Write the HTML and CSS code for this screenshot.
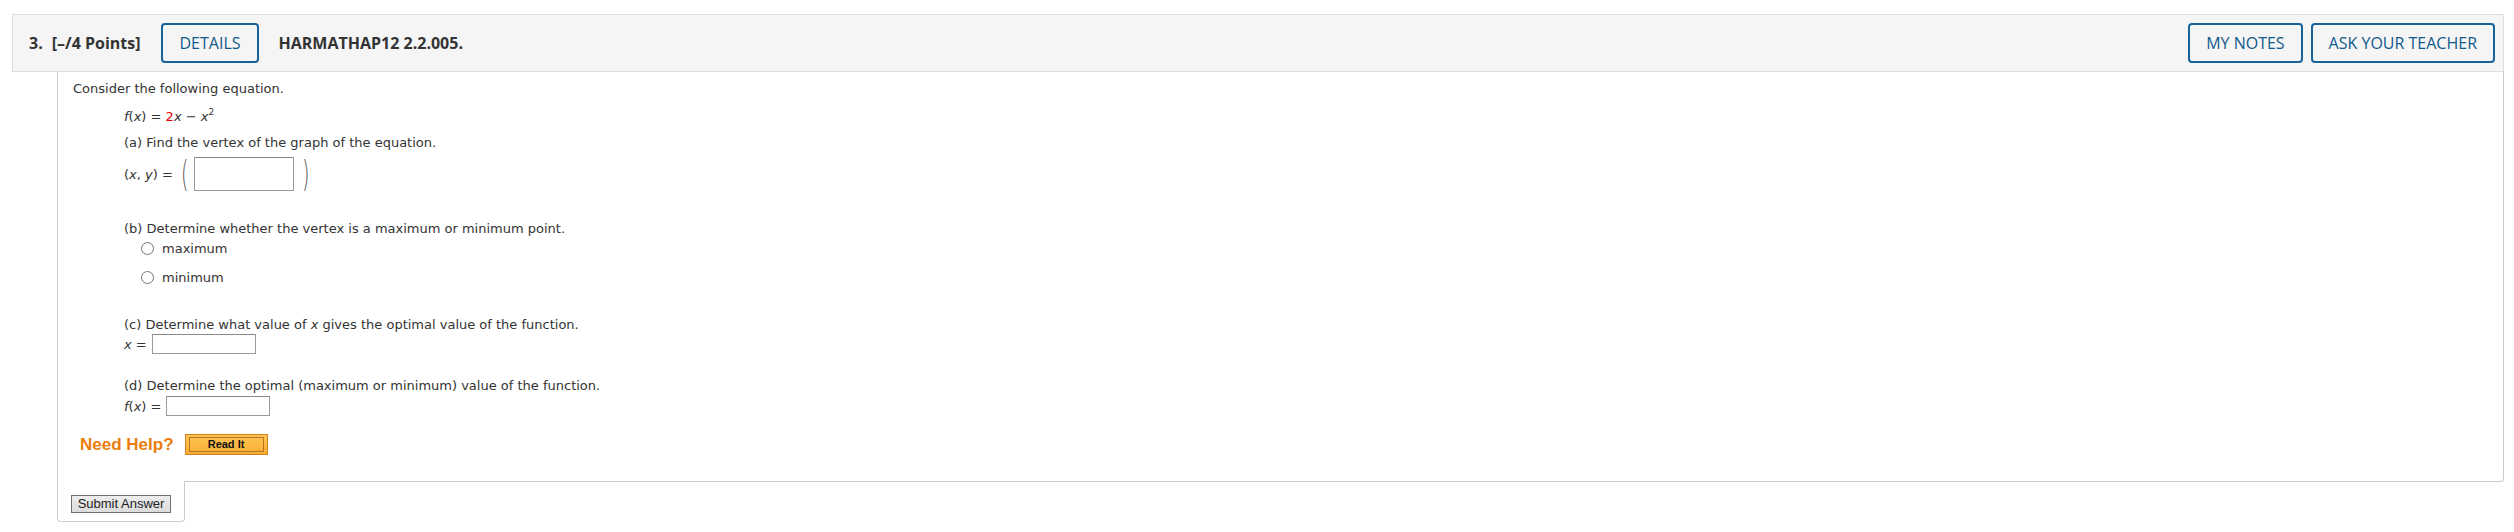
FILE: index.html
```html
<!DOCTYPE html>
<html lang="en">
<head>
<meta charset="utf-8">
<title>Question 3</title>
<link rel="stylesheet" href="styles.css">
</head>
<body>
<div class="question">
  <div class="qhead">
    <span class="qnum">3.</span>
    <span class="qpts">[–/4 Points]</span>
    <button class="hbtn details">DETAILS</button>
    <span class="qcode">HARMATHAP12 2.2.005.</span>
    <span class="spacer"></span>
    <button class="hbtn">MY NOTES</button>
    <button class="hbtn">ASK YOUR TEACHER</button>
  </div>
  <div class="qbody">
    <p class="line intro">Consider the following equation.</p>
    <div class="parts">
      <p class="line eq"><i>f</i>(<i>x</i>) = <span class="red">2</span><i>x</i> − <i>x</i><sup>2</sup></p>
      <p class="line pa">(a) Find the vertex of the graph of the equation.</p>
      <div class="vecrow">
        <span class="lbl">(<i>x</i>, <i>y</i>) =</span>
        <span class="paren">(</span>
        <span class="tbox tall"></span>
        <span class="paren">)</span>
      </div>
      <p class="line pb">(b) Determine whether the vertex is a maximum or minimum point.</p>
      <div class="choices">
        <label class="choice first"><span class="radio"></span>maximum</label>
        <label class="choice second"><span class="radio"></span>minimum</label>
      </div>
      <p class="line pc">(c) Determine what value of <i>x</i> gives the optimal value of the function.</p>
      <div class="ansrow xrow"><span class="lbl"><i>x</i> =</span><span class="tbox"></span></div>
      <p class="line pd">(d) Determine the optimal (maximum or minimum) value of the function.</p>
      <div class="ansrow frow"><span class="lbl"><i>f</i>(<i>x</i>) =</span><span class="tbox"></span></div>
    </div>
    <div class="help">
      <span class="needhelp">Need Help?</span>
      <button class="readit"><span>Read It</span></button>
    </div>
  </div>
  <div class="submitbar">
    <button class="submit">Submit Answer</button>
  </div>
</div>
</body>
</html>
```
FILE: styles.css
```css
* { box-sizing: border-box; }

body {
  margin: 0;
  background: #ffffff;
  font-family: "DejaVu Sans", Verdana, sans-serif;
  color: #333333;
}

.question {
  margin: 14px 10px 0 12px;
}

/* header bar */
.qhead {
  display: flex;
  align-items: center;
  height: 58px;
  padding: 0 8px 0 16px;
  background: #f5f5f5;
  border: 1px solid #dddddd;
  font-family: "Open Sans", "Noto Sans", sans-serif;
  color: #333333;
}
.qnum, .qpts, .qcode {
  font-size: 16px;
  font-weight: 700;
}
.qnum { margin-right: 9px; }
.qpts { margin-right: 21px; }
.spacer { flex: 1; }

.hbtn {
  height: 40px;
  padding: 0 16px;
  background: transparent;
  border: 2px solid #16639b;
  border-radius: 4px;
  font-family: "Open Sans", "Noto Sans", sans-serif;
  font-size: 16px;
  font-weight: 500;
  color: #125a8c;
  margin-left: 8px;
}
.details {
  margin-left: 0;
  margin-right: 20px;
}

/* content */
.qbody {
  margin-left: 45px;
  padding: 9px 15px 26px 15px;
  border: 1px solid #cccccc;
  border-top: none;
  border-bottom-right-radius: 4px;
}
.line {
  margin: 0;
  font-size: 13px;
  line-height: 16px;
}
.parts { margin-left: 51px; }
.eq { margin-top: 12px; }
.pa { margin-top: 10px; }
.pb { margin-top: 30px; }
.pc { margin-top: 32px; }
.pd { margin-top: 24px; }
.red { color: #e00000; }
sup {
  font-size: 9px;
  line-height: 0;
  vertical-align: 6px;
}
i { font-style: oblique; }

.vecrow {
  display: flex;
  align-items: center;
  height: 34px;
  margin-top: 6px;
  font-size: 13px;
}
.paren {
  font-family: "DejaVu Sans", sans-serif;
  font-weight: 200;
  font-size: 24px;
  line-height: 34px;
  color: #555555;
  transform: scale(0.8, 1.5);
}
.vecrow .lbl { margin-right: 7px; }
.vecrow .tbox { margin: 0 7px 0 5px; }

.tbox {
  display: inline-block;
  width: 104px;
  height: 20px;
  border: 1px solid #9a9a9a;
  border-top-color: #8a8a8a;
  background: #ffffff;
}
.tbox.tall {
  width: 100px;
  height: 34px;
}

.choices {
  margin-top: 3px;
  margin-left: 17px;
}
.choice {
  display: flex;
  align-items: center;
  height: 16px;
  font-size: 13px;
}
.choice.second { margin-top: 13px; }
.radio {
  width: 13px;
  height: 13px;
  border: 1px solid #767676;
  border-radius: 50%;
  background: #ffffff;
  margin-right: 8px;
}

.ansrow {
  display: flex;
  align-items: center;
  height: 20px;
  font-size: 13px;
}
.ansrow .lbl { margin-right: 5px; }
.xrow { margin-top: 1px; }
.frow { margin-top: 2px; }

.help {
  display: flex;
  align-items: center;
  margin-top: 18px;
  margin-left: 7px;
  height: 21px;
}
.needhelp {
  font-family: "Liberation Sans", Arial, sans-serif;
  font-weight: 700;
  font-size: 17px;
  color: #ea7d0b;
  margin-right: 11px;
}
.readit {
  width: 83px;
  height: 21px;
  padding: 2px 3px;
  border: 1px solid #d2801f;
  background: linear-gradient(#ffc553, #fbad32);
}
.readit span {
  display: block;
  height: 100%;
  border: 1px solid #b9721f;
  font-family: "Liberation Sans", Arial, sans-serif;
  font-weight: 700;
  font-size: 11px;
  line-height: 13px;
  color: #111111;
  text-align: center;
}

/* submit tab */
.submitbar {
  margin-left: 45px;
  margin-top: -1px;
  width: 128px;
  height: 41px;
  padding: 12px 0 0 13px;
  background: #ffffff;
  border: 1px solid #cccccc;
  border-top: none;
  border-radius: 0 0 4px 4px;
}
.submit {
  width: 100px;
  height: 18px;
  padding: 0;
  border: 1px solid #707070;
  background: linear-gradient(#ededed, #dcdcdc);
  font-family: "Liberation Sans", Arial, sans-serif;
  font-size: 13px;
  line-height: 16px;
  color: #222222;
}
```
